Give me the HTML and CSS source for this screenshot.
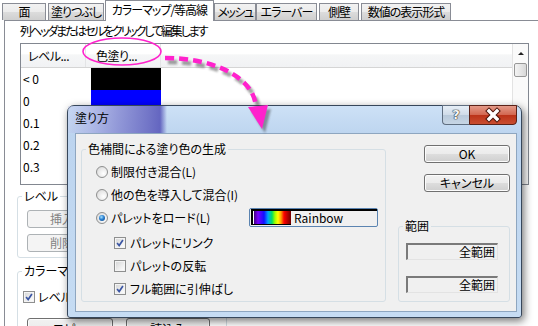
FILE: index.html
```html
<!DOCTYPE html>
<html lang="ja">
<head>
  <meta charset="UTF-8" />
  <title>カラーマップ/等高線</title>
  <link rel="stylesheet" href="styles.css">
</head>
<body>
  <!-- 背景のプロット詳細ダイアログ -->
  <div class="tabs">
    <div class="tab tab-face">面</div>
    <div class="tab tab-fill">塗りつぶし</div>
    <div class="tab tab-active">カラーマップ/等高線</div>
    <div class="tab tab-mesh">メッシュ</div>
    <div class="tab tab-error">エラーバー</div>
    <div class="tab tab-wall">側壁</div>
    <div class="tab tab-format">数値の表示形式</div>
  </div>

  <div class="panel">
    <p class="hint">列ヘッダまたはセルをクリックして編集します</p>

    <div class="grid">
      <div class="grid-main">
        <div class="grid-head">
          <div class="col-level">レベル...</div>
          <div class="col-fill">色塗り...</div>
        </div>
        <div class="grid-row"><div class="col-level">&lt; 0</div><div class="col-fill"><span class="swatch swatch-black"></span></div></div>
        <div class="grid-row"><div class="col-level">0</div><div class="col-fill"><span class="swatch swatch-blue"></span></div></div>
        <div class="grid-row"><div class="col-level">0.1</div><div class="col-fill"><span class="swatch swatch-violet"></span></div></div>
        <div class="grid-row"><div class="col-level">0.2</div><div class="col-fill"><span class="swatch swatch-purple"></span></div></div>
        <div class="grid-row"><div class="col-level">0.3</div><div class="col-fill"><span class="swatch swatch-cyan"></span></div></div>
      </div>
      <div class="scrollbar">
        <span class="scroll-up"></span>
        <span class="scroll-thumb"></span>
      </div>
    </div>

    <fieldset class="group group-levels">
      <legend>レベル</legend>
      <button class="btn btn-disabled">挿入</button>
      <button class="btn btn-disabled">削除</button>
    </fieldset>

    <fieldset class="group group-colormap">
      <legend>カラーマップ</legend>
      <label class="check-row">
        <span class="checkbox checked">
          <svg viewBox="0 0 12 12"><path d="M2.5 6 L5 9 L9.5 2.5" /></svg>
        </span>
        レベル
      </label>
      <div class="btn-row">
        <button class="btn btn-copy">コピー</button>
        <button class="btn btn-load">読込み</button>
      </div>
    </fieldset>
  </div>

  <!-- 塗り方ダイアログ -->
  <div class="dialog">
    <div class="titlebar">塗り方</div>
    <div class="caption-buttons">
      <div class="cap-help">?</div>
      <div class="cap-close">
        <svg width="46" height="18" viewBox="0 0 46 18">
          <path class="x-edge" d="M19 5 L27 13 M27 5 L19 13" />
          <path class="x-fill" d="M19 5 L27 13 M27 5 L19 13" />
        </svg>
      </div>
    </div>

    <div class="client">
      <fieldset class="group group-mix">
        <legend>色補間による塗り色の生成</legend>
        <div class="opt-row"><span class="radio"></span>制限付き混合(L)</div>
        <div class="opt-row"><span class="radio"></span>他の色を導入して混合(I)</div>
        <div class="opt-row">
          <span class="radio checked"></span>パレットをロード(L)
          <div class="palette">
            <span class="palette-swatch"></span>
            <span class="palette-name">Rainbow</span>
          </div>
        </div>
        <div class="sub-opts">
          <div class="opt-row">
            <span class="checkbox checked"><svg viewBox="0 0 12 12"><path d="M2.5 6 L5 9 L9.5 2.5" /></svg></span>パレットにリンク
          </div>
          <div class="opt-row">
            <span class="checkbox"></span>パレットの反転
          </div>
          <div class="opt-row">
            <span class="checkbox checked"><svg viewBox="0 0 12 12"><path d="M2.5 6 L5 9 L9.5 2.5" /></svg></span>フル範囲に引伸ばし
          </div>
        </div>
      </fieldset>

      <div class="side">
        <button class="btn btn-ok">OK</button>
        <button class="btn btn-cancel">キャンセル</button>
        <fieldset class="group group-range">
          <legend>範囲</legend>
          <div class="range-field">全範囲</div>
          <div class="range-field">全範囲</div>
        </fieldset>
      </div>
    </div>
  </div>

  <!-- ピンクの注釈 -->
  <svg class="annotation" viewBox="0 0 538 326">
    <defs>
      <filter id="soft" x="-20%" y="-20%" width="140%" height="140%">
        <feGaussianBlur stdDeviation="1.2" />
      </filter>
    </defs>
    <g class="shadow" filter="url(#soft)" transform="translate(3 4)">
      <path class="dash" d="M165 58 C 215 58, 255 78, 256 108" />
      <polygon points="248,107 268,105 262,129" />
    </g>
    <ellipse class="ring" cx="122" cy="51.5" rx="39" ry="13.5" />
    <path class="dash arrow" d="M165 58 C 215 58, 255 78, 256 108" />
    <polygon class="arrow-head" points="248,107 268,105 262,129" />
  </svg>
</body>
</html>
```

FILE: styles.css
```css
body {
  margin: 0;
  width: 538px;
  height: 326px;
  overflow: hidden;
  position: relative;
  background: #fff;
  color: #000;
  font-family: "Noto Sans CJK JP", "Noto Sans", sans-serif;
  font-size: 12px;
  line-height: 14px;
  font-feature-settings: "palt";
}
fieldset {
  margin: 0;
  min-width: 0;
}
button {
  font: inherit;
  color: inherit;
}

/* タブ */
.tabs {
  display: flex;
  align-items: flex-end;
  height: 20px;
  padding-left: 2px;
}
.tab {
  box-sizing: border-box;
  height: 17px;
  border: 1px solid #898c95;
  border-bottom: none;
  background: linear-gradient(#f2f2f2, #ebebeb 50%, #dcdcdc 51%, #cfcfcf);
  display: flex;
  align-items: center;
  justify-content: center;
  margin-right: 2px;
  white-space: nowrap;
  overflow: hidden;
  letter-spacing: -1px;
}
.tab-face   { width: 44px; }
.tab-fill   { width: 56px; margin-right: 1px; }
.tab-active {
  width: 109px;
  height: 21px;
  margin: 0 0 -1px;
  background: #fff;
  position: relative;
  z-index: 1;
  align-items: flex-start;
  padding-top: 2px;
}
.tab-mesh   { width: 42px; margin-right: 0; letter-spacing: -1.5px; }
.tab-error  { width: 61px; }
.tab-wall   { width: 40px; }
.tab-format { width: 90px; }

.panel {
  margin-left: 4px;
  height: 305px;
  overflow: hidden;
  border-top: 1px solid #898c95;
  border-left: 1px solid #898c95;
}
.hint {
  margin: 3px 0 0 15px;
  letter-spacing: -2.1px;
}

/* ワークシート風のグリッド */
.grid {
  box-sizing: border-box;
  margin: 5px 0 0 15px;
  width: 509px;
  height: 142px;
  border: 1px solid #828790;
  display: flex;
}
.grid-main {
  flex: 1;
}
.grid-head {
  display: flex;
  height: 23px;
  border-bottom: 1px solid #d5d5d5;
  background: linear-gradient(#fff 45%, #f5f6f7 46%, #f1f2f4);
}
.grid-head > div {
  display: flex;
  align-items: center;
  border-right: 1px solid #e3e4e6;
  letter-spacing: -0.5px;
}
.grid-head .col-level { padding-left: 7px; }
.grid-head .col-fill  { padding-left: 10px; }
.col-level {
  box-sizing: border-box;
  width: 65px;
}
.col-fill {
  box-sizing: border-box;
  width: 75px;
}
.grid-row {
  display: flex;
  height: 22px;
}
.grid-row .col-level {
  display: flex;
  align-items: center;
  padding-left: 2px;
}
.grid-row .col-fill {
  padding-left: 5px;
}
.swatch {
  display: block;
  width: 70px;
  height: 100%;
}
.swatch-black  { background: #000; }
.swatch-blue   { background: #0000ff; }
.swatch-violet { background: #5000ff; }
.swatch-purple { background: #8000ff; }
.swatch-cyan   { background: #0080ff; }

.scrollbar {
  width: 15px;
  border-left: 1px solid #e3e3e3;
  background: #fafafa;
  display: flex;
  flex-direction: column;
  align-items: center;
}
.scroll-up {
  margin-top: 8px;
  width: 0;
  height: 0;
  border-left: 3px solid transparent;
  border-right: 3px solid transparent;
  border-bottom: 3px solid #222;
}
.scroll-thumb {
  box-sizing: border-box;
  margin-top: 8px;
  width: 13px;
  height: 14px;
  border: 1px solid #979797;
  border-radius: 2px;
  background: linear-gradient(to right, #f3f3f3, #e6e6e6 50%, #d8d8d8);
}

/* グループボックス */
.group {
  box-sizing: border-box;
  border: 1px solid #d5dfe5;
  border-radius: 3px;
  padding: 0;
}
.group legend {
  margin-left: 4px;
  padding: 0 2px;
  line-height: 14px;
}
.group-levels {
  margin: 4px 0 0 12px;
  width: 210px;
  height: 69px;
  padding-top: 7px;
}
.group-levels .btn {
  display: block;
  width: 70px;
  height: 18px;
  margin: 0 0 6px 9px;
}
.group-colormap {
  margin: 6px 0 0 12px;
  width: 210px;
  height: 80px;
  padding-top: 12px;
}
.check-row {
  display: flex;
  align-items: center;
  gap: 3px;
  height: 14px;
  margin-left: 5px;
}
.btn-row {
  display: flex;
  gap: 13px;
  margin: 14px 0 0 9px;
}
.btn-copy { width: 86px; height: 22px; }
.btn-load { width: 84px; height: 22px; }

/* ボタン */
.btn {
  box-sizing: border-box;
  padding: 0;
  border: 1px solid #707070;
  border-radius: 3px;
  background: linear-gradient(#f2f2f2, #ebebeb 50%, #dddddd 51%, #cfcfcf);
  box-shadow: inset 0 0 0 1px #fcfcfc;
  line-height: 14px;
}
.btn-disabled {
  color: #838383;
  border-color: #adb2b5;
  background: #f4f4f4;
  box-shadow: none;
}

/* チェックボックスとラジオ */
.checkbox {
  box-sizing: border-box;
  flex: none;
  width: 12px;
  height: 12px;
  border: 1px solid #8e8f8f;
  background: linear-gradient(135deg, #d2d3d4, #f4f4f4 70%, #fff);
  box-shadow: inset 0 0 0 1px #f4f4f4;
}
.checkbox svg {
  display: block;
  width: 10px;
  height: 10px;
}
.checkbox path {
  fill: none;
  stroke: #3a55a3;
  stroke-width: 2;
}
.radio {
  box-sizing: border-box;
  flex: none;
  width: 12px;
  height: 12px;
  border: 1px solid #8e8f8f;
  border-radius: 50%;
  background: radial-gradient(circle at 65% 65%, #fff, #e6e6e6 60%, #cfcfcf);
  display: flex;
  align-items: center;
  justify-content: center;
}
.radio.checked::after {
  content: "";
  width: 6px;
  height: 6px;
  border-radius: 50%;
  background: radial-gradient(circle at 40% 35%, #a6e2ff, #2a7fd0 45%, #0c3f7a);
}

/* 塗り方ダイアログ */
.dialog {
  position: absolute;
  left: 67px;
  top: 105px;
  width: 455px;
  height: 213px;
  box-sizing: border-box;
  border: 1px solid #37475b;
  border-radius: 7px 7px 3px 3px;
  padding: 0 4px 5px 7px;
  background: linear-gradient(#cde1f6, #bcd4ef 30px, #c6dcf3);
  box-shadow: 2px 3px 9px rgba(0, 0, 0, 0.55);
  display: flex;
  flex-direction: column;
}
.titlebar {
  height: 27px;
  box-sizing: border-box;
  padding-top: 5px;
  margin-left: -7px;
  padding-left: 7px;
  background: linear-gradient(to right,
    rgba(190, 200, 235, 0.35) 0,
    rgba(160, 160, 222, 0.5) 22px,
    rgba(125, 125, 205, 0.7) 50px,
    rgba(100, 100, 192, 0.85) 80px,
    rgba(92, 92, 188, 0.92) 92px,
    rgba(190, 214, 240, 0) 99px);
}
.caption-buttons {
  position: absolute;
  top: -1px;
  right: 4px;
  z-index: 2;
  width: 75px;
  height: 20px;
  display: flex;
}
.cap-help {
  box-sizing: border-box;
  flex: none;
  width: 27px;
  height: 20px;
  border: 1px solid #5f6e80;
  border-right: none;
  border-radius: 0 0 0 4px;
  background: linear-gradient(#e6eef6, #cfdbe8 50%, #b8c9da 51%, #c7d6e5);
  color: #f4f7fa;
  font-family: "DejaVu Sans", sans-serif;
  font-weight: bold;
  font-size: 13px;
  line-height: 18px;
  text-align: center;
  text-shadow: 0 0 1px #222, 0 0 1px #222, 0 0 1px #222;
}
.cap-close {
  box-sizing: border-box;
  flex: none;
  width: 48px;
  height: 20px;
  border: 1px solid #5a2218;
  border-radius: 0 0 4px 0;
  background-color: #c23f25;
  background-image: linear-gradient(#e49a89, #d2664f 50%, #bb3218 51%, #c94d30);
}
.cap-close svg {
  display: block;
}
.x-edge {
  fill: none;
  stroke: #4a1208;
  stroke-width: 5.4;
  stroke-linecap: square;
}
.x-fill {
  fill: none;
  stroke: #fff;
  stroke-width: 3.4;
  stroke-linecap: square;
}

.client {
  flex: 1;
  border: 1px solid #8ea6c0;
  background: #f0f0f0;
  display: flex;
  padding: 8px 0 0 5px;
}
.group-mix {
  width: 305px;
  height: 160px;
  padding: 4px 7px 0 0;
}
.opt-row {
  display: flex;
  align-items: center;
  gap: 3px;
  height: 23px;
  margin-left: 14px;
}
.sub-opts {
  margin-top: 2px;
  padding-left: 18px;
}
.sub-opts .opt-row {
  gap: 4px;
}
.palette {
  box-sizing: border-box;
  margin-left: auto;
  width: 129px;
  height: 19px;
  border: 1px solid #5b84b1;
  border-radius: 2px;
  padding: 0 0 1px 1px;
  background: #f0f0f0;
  display: flex;
  align-items: stretch;
}
.palette-swatch {
  box-sizing: border-box;
  width: 40px;
  border-top: 2px solid #000;
  border-left: 2px solid #000;
  border-bottom: 1px solid #000;
  background: linear-gradient(to right,
    #fff 0, #fff 1px,
    #40007f 1px, #7a00ff 5px, #1010ff 11px, #00a0ff 15px, #00e060 19px,
    #a0ff00 22px, #ffff00 25px, #ffa000 28px, #ff0000 31px, #c00000 34px, #700000 38px);
}
.palette-name {
  flex: 1;
  border-top: 2px solid #000;
  padding-left: 3px;
  line-height: 14px;
}

.side {
  margin-left: 12px;
  width: 112px;
  display: flex;
  flex-direction: column;
  align-items: flex-end;
}
.btn-ok {
  margin-top: 3px;
  width: 86px;
  height: 18px;
}
.btn-cancel {
  margin-top: 11px;
  width: 86px;
  height: 18px;
}
.group-range {
  margin-top: 27px;
  width: 112px;
  height: 83px;
  padding-top: 10px;
}
.range-field {
  box-sizing: border-box;
  width: 92px;
  height: 17px;
  margin-left: 7px;
  border-style: solid;
  border-width: 2px 1px 1px 2px;
  border-color: #7a7a7a #e3e3e3 #e3e3e3 #7a7a7a;
  background: #f0f0f0;
  text-align: right;
  padding-right: 2px;
  line-height: 14px;
}
.range-field + .range-field {
  margin-top: 16px;
}

/* 注釈 */
.annotation {
  position: absolute;
  left: 0;
  top: 0;
  width: 538px;
  height: 326px;
  pointer-events: none;
}
.ring {
  fill: none;
  stroke: #ff22cc;
  stroke-width: 1.6;
}
.dash {
  fill: none;
  stroke-width: 4.5;
  stroke-dasharray: 9 5;
}
.arrow {
  stroke: #ff22cc;
}
.arrow-head {
  fill: #ff22cc;
}
.shadow {
  opacity: 0.45;
}
.shadow .dash {
  stroke: #333;
}
.shadow polygon {
  fill: #333;
}
```
